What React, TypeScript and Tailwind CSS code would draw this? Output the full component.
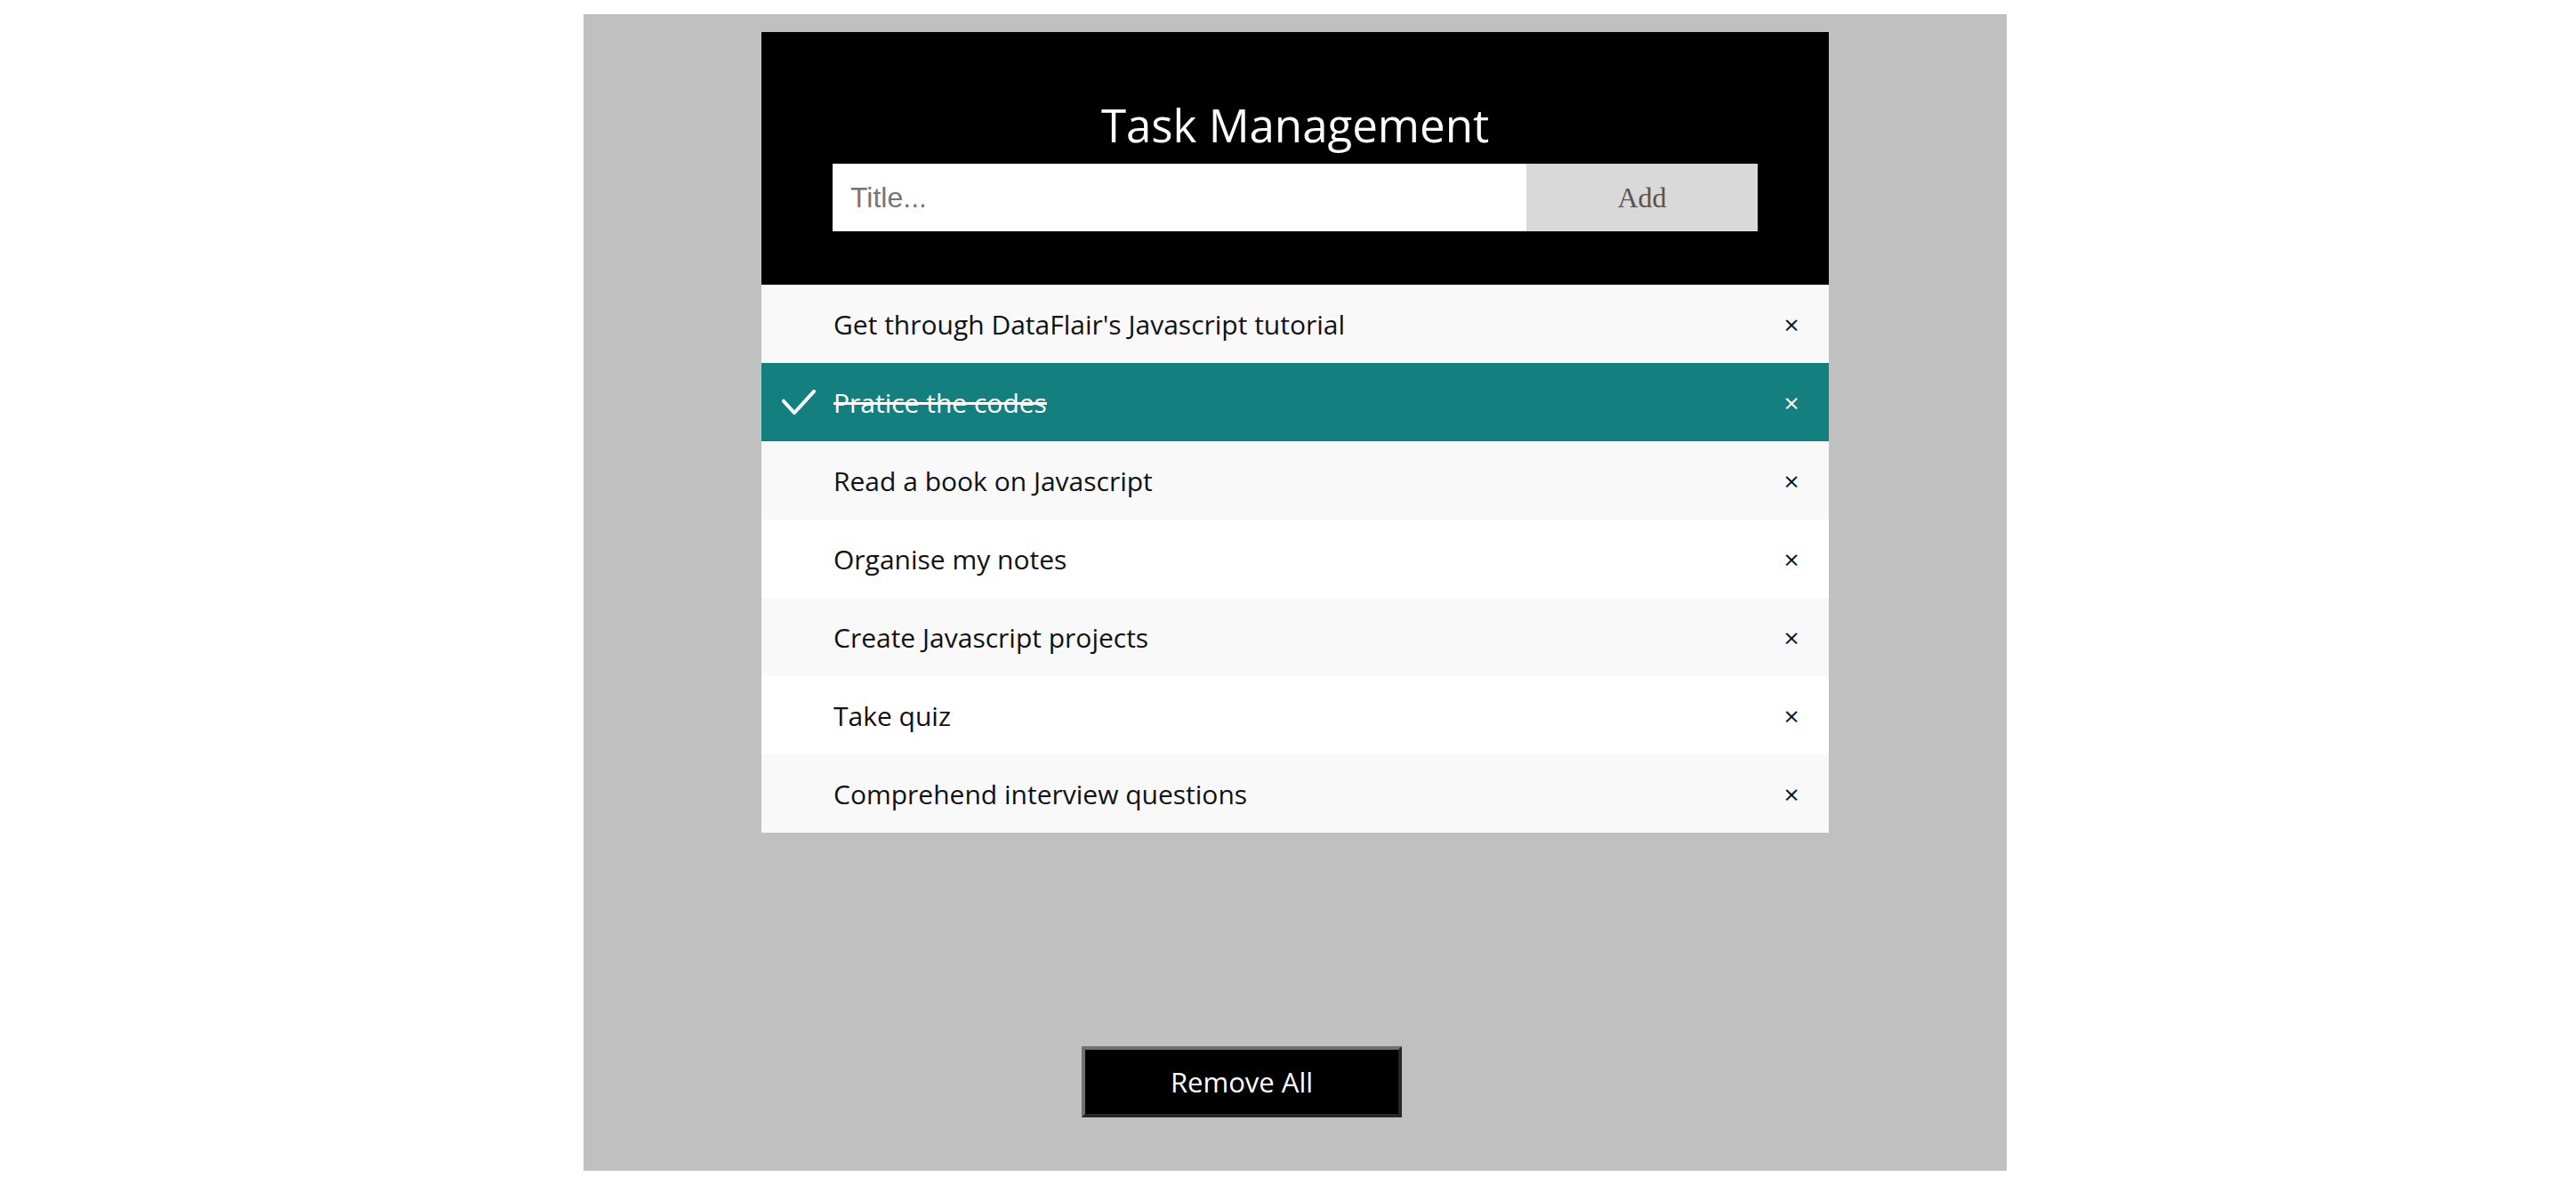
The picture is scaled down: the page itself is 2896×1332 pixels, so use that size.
import { useState } from "react";

const initialTasks = [
  { title: "Get through DataFlair's Javascript tutorial", done: false },
  { title: "Pratice the codes", done: true },
  { title: "Read a book on Javascript", done: false },
  { title: "Organise my notes", done: false },
  { title: "Create Javascript projects", done: false },
  { title: "Take quiz", done: false },
  { title: "Comprehend interview questions", done: false },
];

function CheckMark() {
  return (
    <svg width="38" height="28" viewBox="0 0 38 28" className="shrink-0">
      <polyline
        points="2,13 14,26 36,2"
        fill="none"
        stroke="white"
        strokeWidth="4"
        strokeLinecap="square"
      />
    </svg>
  );
}

export default function App() {
  const [tasks, setTasks] = useState(initialTasks);
  const [text, setText] = useState("");

  const addTask = () => {
    if (!text.trim()) return;
    setTasks([...tasks, { title: text, done: false }]);
    setText("");
  };

  return (
    <div className="min-h-screen bg-white flex justify-center pl-[16px] pt-[16px] font-['Open_Sans',sans-serif]">
      <div className="w-[1600px] h-[1300px] bg-[#c0c0c0] pt-[20px]">
        <div className="w-[1200px] mx-auto">
          {/* Header */}
          <div className="bg-black px-[80px] pt-[60px] pb-[60px]">
            <h2 className="text-white text-[51px] leading-[88px] text-center font-normal">
              Task Management
            </h2>
            <div className="flex h-[76px]">
              <input
                value={text}
                onChange={(e) => setText(e.target.value)}
                placeholder="Title..."
                className="w-[780px] h-full bg-white px-[20px] text-[32px] font-['Liberation_Sans',Arial,sans-serif] text-black placeholder:text-[#757575] outline-none"
              />
              <button
                onClick={addTask}
                className="w-[260px] h-full bg-[#d9d9d9] text-[#555555] text-[32px] font-['Liberation_Serif','Times_New_Roman',serif]"
              >
                Add
              </button>
            </div>
          </div>

          {/* List */}
          <ul>
            {tasks.map((t, i) => (
              <li
                key={i}
                onClick={() =>
                  setTasks(tasks.map((x, j) => (j === i ? { ...x, done: !x.done } : x)))
                }
                className={
                  t.done
                    ? "h-[88px] flex items-center bg-[#13807f] text-white cursor-pointer"
                    : i % 2 === 0
                    ? "h-[88px] flex items-center bg-[#f9f9f9] text-[#111111] cursor-pointer"
                    : "h-[88px] flex items-center bg-white text-[#111111] cursor-pointer"
                }
              >
                <div className="w-[81px] flex justify-center pl-[2px]">{t.done && <CheckMark />}</div>
                <span className={t.done ? "flex-1 text-[30px] line-through" : "flex-1 text-[30px]"}>
                  {t.title}
                </span>
                <span
                  onClick={(e) => {
                    e.stopPropagation();
                    setTasks(tasks.filter((_, j) => j !== i));
                  }}
                  className="w-[82px] text-center text-[30px] pr-[2px]"
                >
                  ×
                </span>
              </li>
            ))}
          </ul>

          <button
            onClick={() => setTasks([])}
            className="mt-[240px] ml-[360px] w-[360px] h-[80px] bg-black text-white text-[31px] border-[4px] border-t-[#707070] border-l-[#707070] border-b-[#262626] border-r-[#262626]"
          >
            Remove All
          </button>
        </div>
      </div>
    </div>
  );
}
